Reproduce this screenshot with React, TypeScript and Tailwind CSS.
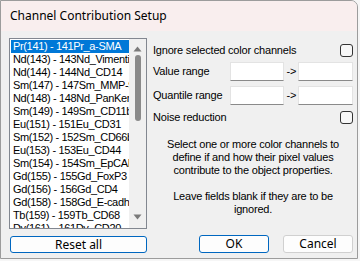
import React from "react";

const items = [
  "Pr(141) - 141Pr_a-SMA",
  "Nd(143) - 143Nd_Vimentin",
  "Nd(144) - 144Nd_CD14",
  "Sm(147) - 147Sm_MMP-9",
  "Nd(148) - 148Nd_PanKeratin",
  "Sm(149) - 149Sm_CD11b",
  "Eu(151) - 151Eu_CD31",
  "Sm(152) - 152Sm_CD66b",
  "Eu(153) - 153Eu_CD44",
  "Sm(154) - 154Sm_EpCAM",
  "Gd(155) - 155Gd_FoxP3",
  "Gd(156) - 156Gd_CD4",
  "Gd(158) - 158Gd_E-cadherin",
  "Tb(159) - 159Tb_CD68",
  "Dy(161) - 161Dy_CD20",
];

const ui = { fontFamily: '"Liberation Sans", Arial, sans-serif' };
const title = { fontFamily: '"Noto Sans", "Open Sans", sans-serif' };

function Check() {
  return <div className="w-[13px] h-[13px] border border-[#333] rounded-[3px] bg-[#f7f7f7]" />;
}

function Field() {
  return <div className="w-[55px] h-[19px] bg-white border border-[#e3e3e3] border-b-[#8a8a8a]" />;
}

export default function App() {
  return (
    <div className="w-[360px] h-[261px] bg-[#f6f6f6] overflow-hidden text-black" style={ui}>
      <div className="w-[358px] h-[259px] border border-[#9c9c9c] rounded-tr-[7px] bg-[#f0f0f0] flex flex-col overflow-hidden">
        <div className="h-[30px] shrink-0 bg-[#f9eeee] flex items-center pl-[9px] text-[12px] leading-none" style={title}>
          Channel Contribution Setup
        </div>
        <div className="flex pl-[8px] pt-[7px]">
          <div className="w-[138px] flex flex-col">
            <div className="h-[191px] border border-[#828790] bg-white flex">
              <div className="flex-1 pt-[1px] pl-[1px] overflow-hidden">
                {items.map((t, i) => (
                  <div
                    key={t}
                    className={`h-[13px] pl-[2px] text-[11px] tracking-[-0.35px] leading-[13px] whitespace-nowrap overflow-hidden ${i === 0 ? "bg-[#0078d7] text-white" : ""}`}
                  >
                    {t}
                  </div>
                ))}
              </div>
              <div className="w-[17px] bg-[#f0f0f0] flex flex-col items-center">
                <svg width="9" height="6" viewBox="0 0 9 6" className="mt-[7px]">
                  <path d="M0.5 5.5 L4.5 0.5 L8.5 5.5 Z" fill="#7a7a7a" />
                </svg>
                <div className="w-[6px] h-[66px] mt-[3px] rounded-[3px] bg-[#8a8a8a]" />
                <div className="flex-1" />
                <svg width="9" height="6" viewBox="0 0 9 6" className="mb-[8px]">
                  <path d="M0.5 0.5 L4.5 5.5 L8.5 0.5 Z" fill="#7a7a7a" />
                </svg>
              </div>
            </div>
            <button className="mt-[7px] ml-[1px] w-[137px] h-[17px] border border-[#0067c0] rounded-[3px] bg-[#fdfdfd] text-[12px] leading-none" style={title}>
              Reset all
            </button>
          </div>
          <div className="w-[200px] ml-[6px] flex flex-col text-[11px] tracking-[-0.2px]">
            <div className="h-[19px] mt-[3px] flex items-center justify-between">
              <span>Ignore selected color channels</span>
              <Check />
            </div>
            <div className="h-[19px] mt-[2px] flex items-center">
              <span className="w-[77px]">Value range</span>
              <Field />
              <span className="w-[14px] text-center">-&gt;</span>
              <Field />
            </div>
            <div className="h-[19px] mt-[5px] flex items-center">
              <span className="w-[77px]">Quantile range</span>
              <Field />
              <span className="w-[14px] text-center">-&gt;</span>
              <Field />
            </div>
            <div className="h-[19px] mt-[3px] flex items-center justify-between">
              <span>Noise reduction</span>
              <Check />
            </div>
            <div className="mt-[11px] text-center leading-[13px] px-[4px]">
              <p>Select one or more color channels to define if and how their pixel values contribute to the object properties.</p>
              <p className="mt-[13px]">Leave fields blank if they are to be ignored.</p>
            </div>
            <div className="mt-auto flex justify-end gap-[14px] tracking-normal">
              <button className="w-[70px] h-[18px] border border-[#0067c0] rounded-[3px] bg-[#fdfdfd] text-[12px] leading-none" style={title}>
                OK
              </button>
              <button className="w-[70px] h-[18px] border border-[#d0d0d0] rounded-[3px] bg-[#fdfdfd] text-[12px] leading-none" style={title}>
                Cancel
              </button>
            </div>
          </div>
        </div>
      </div>
    </div>
  );
}
